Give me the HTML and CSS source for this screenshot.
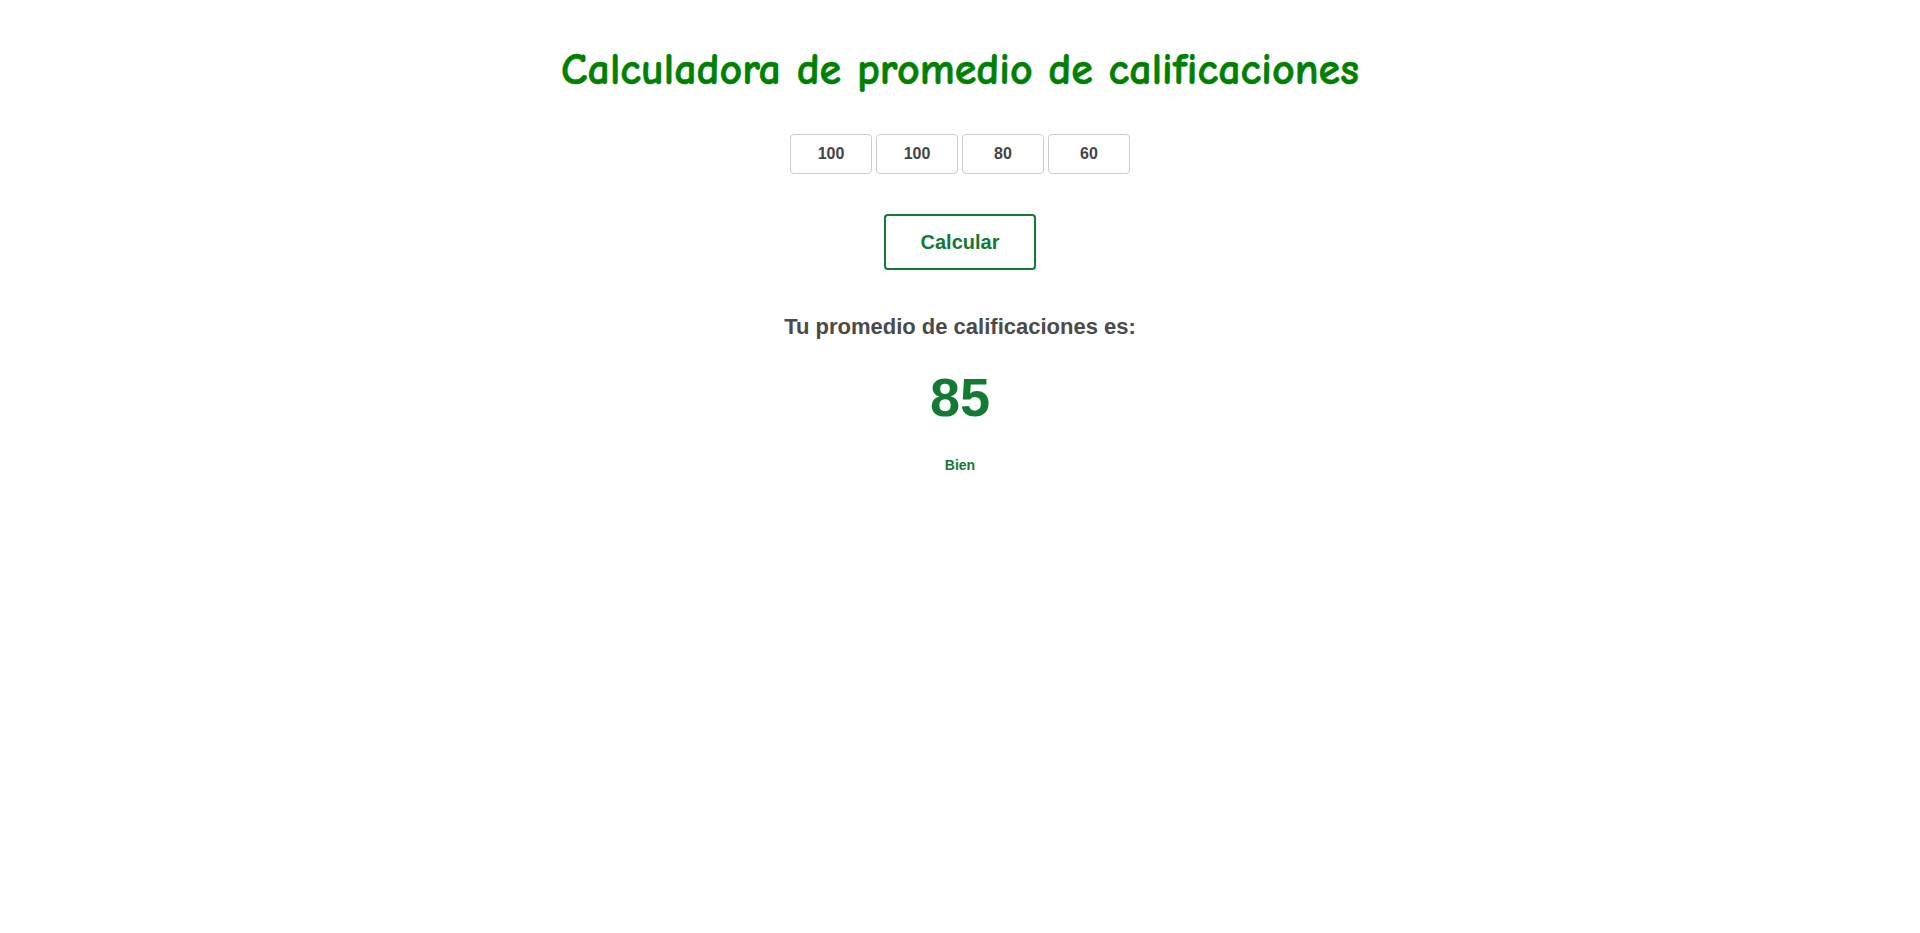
FILE: index.html
```html
<!DOCTYPE html>
<html lang="es">
<head>
<meta charset="utf-8">
<title>Calculadora de promedio</title>
<link rel="stylesheet" href="styles.css">
</head>
<body>
<main class="app">
  <h1 class="title">Calculadora de promedio de calificaciones</h1>
  <div class="grades">
    <input class="grade" type="text" value="100">
    <input class="grade" type="text" value="100">
    <input class="grade" type="text" value="80">
    <input class="grade" type="text" value="60">
  </div>
  <button class="calc">Calcular</button>
  <p class="result-label">Tu promedio de calificaciones es:</p>
  <p class="result-value">85</p>
  <p class="result-note">Bien</p>
</main>
</body>
</html>
```

FILE: styles.css
```css
html, body {
  margin: 0;
  padding: 0;
  background: #ffffff;
}
body {
  font-family: "Liberation Sans", Arial, sans-serif;
}
.app {
  display: flex;
  flex-direction: column;
  align-items: center;
  padding-top: 42px;
}
.title {
  margin: 0;
  font-family: "Comic Sans MS", "Comic Neue", cursive;
  font-size: 44px;
  line-height: 56px;
  font-weight: bold;
  color: #008000;
  -webkit-text-stroke: 0.6px #008000;
}
.grades {
  display: flex;
  gap: 4px;
  margin-top: 36px;
}
.grade {
  box-sizing: border-box;
  width: 82px;
  height: 40px;
  border: 1px solid #cccccc;
  border-radius: 4px;
  padding: 0;
  text-align: center;
  font-family: "Liberation Sans", Arial, sans-serif;
  font-size: 16px;
  font-weight: bold;
  color: #444444;
  background: #ffffff;
}
.calc {
  box-sizing: border-box;
  margin-top: 40px;
  width: 152px;
  height: 56px;
  border: 2px solid #137a33;
  border-radius: 4px;
  background: #ffffff;
  font-family: "Liberation Sans", Arial, sans-serif;
  font-size: 20px;
  font-weight: bold;
  color: #137a33;
  cursor: pointer;
}
.result-label {
  margin: 44px 0 0;
  font-size: 22px;
  line-height: 26px;
  font-weight: bold;
  color: #4a4a4a;
}
.result-value {
  margin: 26px 0 0;
  font-size: 54px;
  line-height: 62px;
  font-weight: bold;
  color: #137a33;
}
.result-note {
  margin: 29px 0 0;
  font-size: 14px;
  line-height: 16px;
  font-weight: bold;
  color: #137a33;
}
```
